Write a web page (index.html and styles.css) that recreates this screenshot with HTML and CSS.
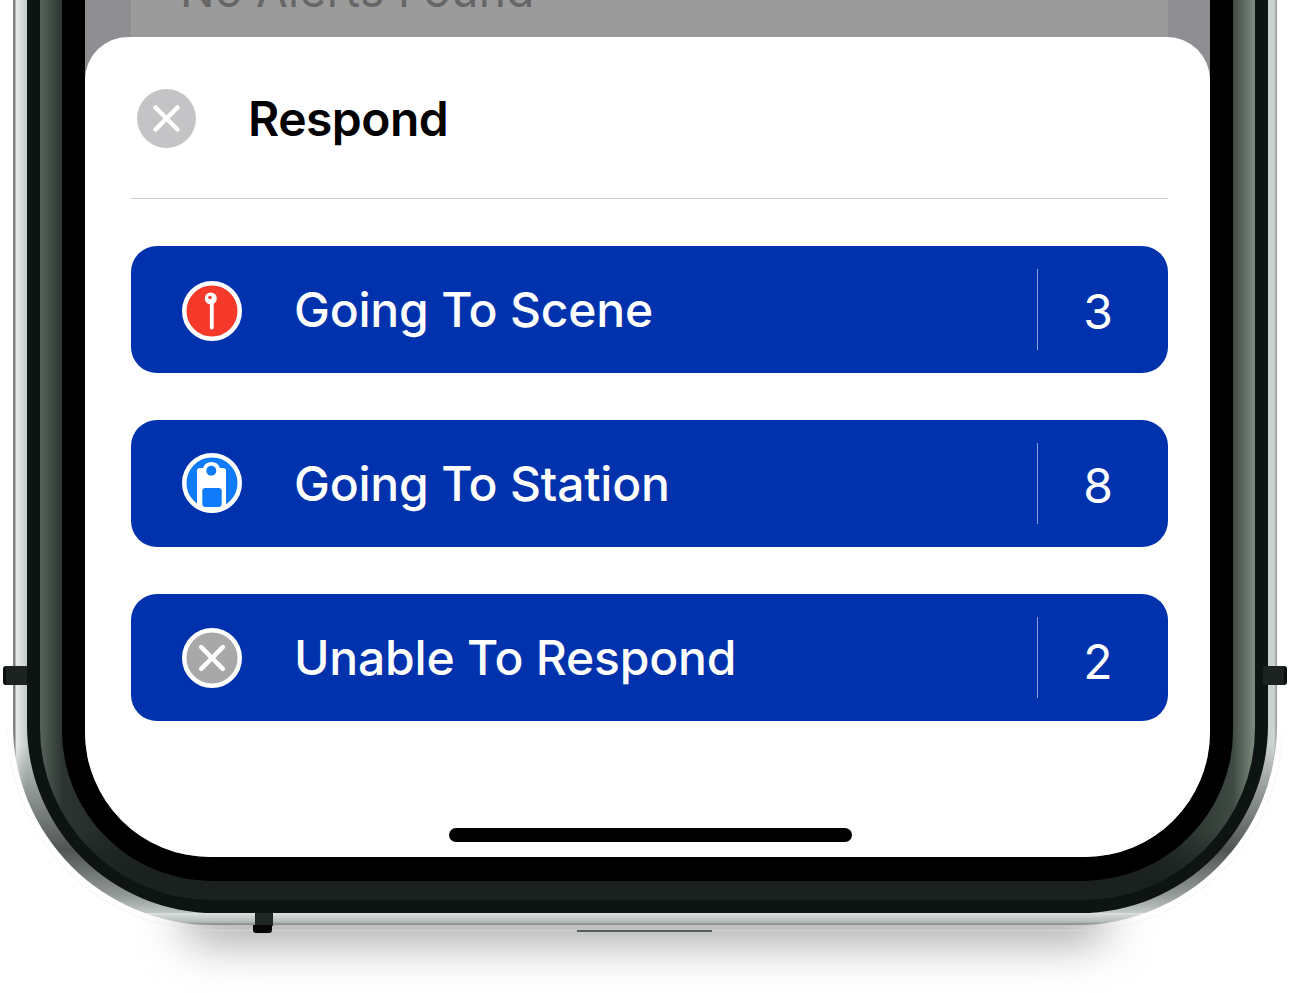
FILE: index.html
```html
<!DOCTYPE html>
<html lang="en">

<head>
  <meta charset="UTF-8">
  <meta name="viewport" content="width=device-width, initial-scale=1.0">
  <title>Respond</title>
  <link rel="stylesheet" href="styles.css">
</head>

<body>
  <div class="phone">
    <div class="floor-shadow"></div>
    <div class="halo"></div>
    <div class="side-key left"></div>
    <div class="side-key right"></div>
    <div class="antenna"></div>
    <div class="speaker"></div>
    <div class="metal">
      <div class="inner-rim">
        <div class="glass">
          <div class="bezel">
            <div class="screen">
              <div class="alerts">
                <p class="alerts-empty">No Alerts Found</p>
              </div>
              <section class="sheet">
                <header class="sheet-head">
                  <svg class="close" viewBox="0 0 59 59">
                    <circle cx="29.5" cy="29.5" r="29.5" fill="#c4c4c6" />
                    <path d="M18.5 18.5l22 22M40.5 18.5l-22 22" stroke="#fff" stroke-width="4.5" stroke-linecap="round" />
                  </svg>
                  <h1>Respond</h1>
                </header>
                <div class="options">
                  <div class="option">
                    <svg class="option-icon pin" viewBox="0 0 62 62">
                      <circle cx="31" cy="31" r="27.75" fill="#f53a2b" stroke="#fff" stroke-width="4.5" />
                      <path d="M30.8 20v27.5" stroke="#fff" stroke-width="3.8" stroke-linecap="round" />
                      <circle cx="29.8" cy="18.5" r="6" fill="#fff" />
                      <circle cx="29" cy="17.5" r="1.8" fill="#f53a2b" />
                    </svg>
                    <span class="option-label">Going To Scene</span>
                    <span class="option-count">3</span>
                  </div>
                  <div class="option">
                    <svg class="option-icon station" viewBox="0 0 62 62">
                      <circle cx="31" cy="31" r="27.75" fill="#0f7bfa" stroke="#fff" stroke-width="4.5" />
                      <path d="M16 19a3 3 0 0 1 3-3h3a9 9 0 0 1 17 0h3a3 3 0 0 1 3 3v35a31 31 0 0 1-29 0z" fill="#fff" />
                      <rect x="21.3" y="36" width="19.4" height="19" rx="3" fill="#0f7bfa" />
                      <circle cx="30.3" cy="18.7" r="5" fill="#0f7bfa" />
                    </svg>
                    <span class="option-label">Going To Station</span>
                    <span class="option-count">8</span>
                  </div>
                  <div class="option">
                    <svg class="option-icon" viewBox="0 0 62 62">
                      <circle cx="31" cy="31" r="27.75" fill="#a8a8a8" stroke="#fff" stroke-width="4.5" />
                      <path d="M20.2 20.2l21.6 21.6M41.8 20.2L20.2 41.8" stroke="#fff" stroke-width="4.5" stroke-linecap="round" />
                    </svg>
                    <span class="option-label">Unable To Respond</span>
                    <span class="option-count last">2</span>
                  </div>
                </div>
                <div class="home-bar"></div>
              </section>
            </div>
          </div>
        </div>
      </div>
    </div>
  </div>
</body>

</html>
```

FILE: styles.css
```css
html,
body {
  margin: 0;
  height: 993px;
  overflow: hidden;
  background: #fff;
  font-family: Inter, "Liberation Sans", sans-serif;
}

.phone {
  position: relative;
  width: 1264px;
  margin-left: 13px;
}

/* frame, outside in */
.metal {
  position: relative;
  padding: 0 9px 12px 14px;
  border-radius: 0 0 200px 200px;
  background:
    linear-gradient(to top, #8d9190 0, #8d9190 1px, #b4bbb8 3px, #d6dcd9 11px, #e2e7e5 12px) bottom / 100% 12px no-repeat,
    linear-gradient(to bottom, rgba(50, 55, 53, 0) 745px, rgba(50, 55, 53, .8) 850px, rgba(50, 55, 53, .35) 895px, rgba(50, 55, 53, 0) 915px),
    linear-gradient(90deg, #7b7f7e 0, #7b7f7e 2px, #e8ecea 3px, #c4ccc9 14px, #c9d0cd 50%, #c9d0cd calc(100% - 8px), #cfd5d3 calc(100% - 3px), #8f9492 100%);
}

.inner-rim {
  padding: 0 13px 13px;
  border-radius: 0 0 188px 188px;
  background: #0e1412;
}

.glass {
  padding: 0 22px 19px;
  border-radius: 0 0 172px 172px;
  background:
    linear-gradient(to top, #1a211e 19px, rgba(26, 33, 30, 0) 70px),
    linear-gradient(90deg, #56635b 0, #2c3531 22px, #1a211e 120px, #1a211e calc(100% - 120px), #3e4a43 calc(100% - 22px), #7f8c81 100%);
}

.bezel {
  padding: 0 23px 24px;
  border-radius: 0 0 150px 150px;
  background: #000;
}

.screen {
  height: 857px;
  overflow: hidden;
  border-radius: 0 0 125px 125px;
  background: #8f8e93;
}

/* greyed list behind the sheet */
.alerts {
  height: 37px;
  margin: 0 42px 0 46px;
  overflow: hidden;
  background: #9b9b9b;
}

.alerts-empty {
  margin: -38px 0 0 49px;
  font-size: 46px;
  line-height: 56px;
  letter-spacing: .3px;
  color: #666;
}

.sheet {
  display: flex;
  flex-direction: column;
  height: 820px;
  padding: 0 42px 0 46px;
  box-sizing: border-box;
  border-radius: 43px 43px 0 0;
  background: #fff;
}

.sheet-head {
  display: flex;
  align-items: center;
  gap: 52px;
  height: 162px;
  padding: 2px 0 0 6px;
  box-sizing: border-box;
  border-bottom: 1px solid #cfcfcf;
}

.close {
  width: 59px;
  height: 59px;
}

.sheet-head h1 {
  margin: 0;
  font-size: 48px;
  font-weight: 600;
  letter-spacing: -.55px;
  color: #000;
}

.options {
  display: flex;
  flex-direction: column;
  gap: 47px;
  margin-top: 47px;
}

.option {
  display: flex;
  align-items: center;
  height: 127px;
  padding: 0 10px 0 50px;
  box-sizing: border-box;
  border-radius: 26px;
  background: #0132ae;
  color: #fff;
}

.option-icon {
  width: 62px;
  height: 62px;
}

.pin {
  margin-top: 2px;
}

.station {
  margin-bottom: 2px;
}

.option-label {
  flex: 1;
  margin-left: 51px;
  font-size: 48px;
  font-weight: 500;
  letter-spacing: -.2px;
}

.option-count {
  display: flex;
  align-items: center;
  justify-content: center;
  width: 121px;
  height: 81px;
  padding-top: 4px;
  box-sizing: border-box;
  border-left: 1px solid rgba(255, 255, 255, .55);
  font-size: 48px;
  font-weight: 400;
}

.option-count.last {
  padding-top: 7px;
}

.home-bar {
  width: 403px;
  height: 14px;
  margin: auto 0 15px 318px;
  border-radius: 7px;
  background: #000;
}

/* bits around the frame */
.floor-shadow {
  position: absolute;
  left: 170px;
  right: 170px;
  top: 895px;
  height: 44px;
  border-radius: 40px;
  background: #999;
  filter: blur(24px);
}

.halo {
  position: absolute;
  left: -6px;
  right: -6px;
  top: 0;
  height: 931px;
  box-sizing: border-box;
  border: 1px dotted #e6e6e6;
  border-top: 0;
  border-radius: 0 0 205px 205px;
  mask-image: linear-gradient(to bottom, transparent 725px, #000 735px);
}

.side-key {
  position: absolute;
  z-index: 1;
  top: 666px;
  width: 24px;
  height: 19px;
  box-sizing: border-box;
  background: #1c2321;
}

.side-key.left {
  left: -10px;
  border-radius: 3px 0 0 3px;
  border-left: 3px solid #0b0f0e;
}

.side-key.right {
  right: -10px;
  border-radius: 0 3px 3px 0;
  border-right: 3px solid #0b0f0e;
}

.antenna {
  position: absolute;
  z-index: 1;
  left: 242px;
  top: 913px;
  width: 18px;
  height: 13px;
  background: #1f2725;
}

.antenna::after {
  content: "";
  position: absolute;
  left: -2px;
  top: 12px;
  width: 19px;
  height: 8px;
  border-radius: 0 0 3px 3px;
  background: #060808;
}

.speaker {
  position: absolute;
  z-index: 1;
  left: 564px;
  top: 930px;
  width: 135px;
  height: 2px;
  background: #55605c;
}
```
